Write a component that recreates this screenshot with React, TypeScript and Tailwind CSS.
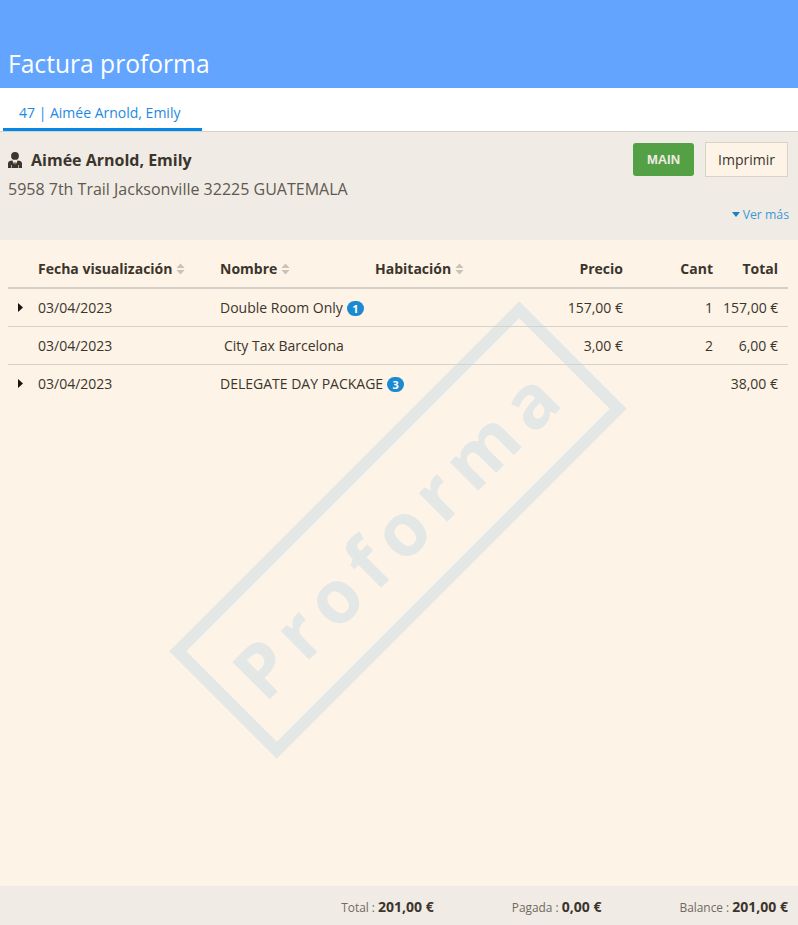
import type { ReactNode } from 'react'

const rows = [
  { date: '03/04/2023', name: 'Double Room Only', badge: '1', price: '157,00 €', qty: '1', total: '157,00 €', expand: true },
  { date: '03/04/2023', name: 'City Tax Barcelona', price: '3,00 €', qty: '2', total: '6,00 €', indent: true },
  { date: '03/04/2023', name: 'DELEGATE DAY PACKAGE', badge: '3', price: '', qty: '', total: '38,00 €', expand: true },
]

function SortIcon() {
  return (
    <svg width="9" height="12" viewBox="0 0 9 12" className="inline-block ml-[4px] align-[-1px]" fill="#c8c2b8">
      <path d="M4.5 0.5 L8.5 5 H0.5 Z" />
      <path d="M4.5 11.5 L8.5 7 H0.5 Z" />
    </svg>
  )
}

function UserIcon() {
  return (
    <svg width="14" height="16" viewBox="0 0 14 16" fill="#3b352c">
      <circle cx="7" cy="3.9" r="3.9" />
      <path d="M0 16 V11.6 C0 9.6 1.8 8.9 4.4 8.6 L6.2 12.6 L6.5 10.2 H7.5 L7.8 12.6 L9.6 8.6 C12.2 8.9 14 9.6 14 11.6 V16 H11 V13 H10.4 V16 H3.6 V13 H3 V16 Z" />
    </svg>
  )
}

function Badge({ children }: { children: ReactNode }) {
  return (
    <span className="inline-block ml-[4px] h-[15px] min-w-[17px] px-[5px] rounded-full bg-[#1b8ad0] text-white text-[11px] font-bold leading-[15px] text-center align-baseline">
      {children}
    </span>
  )
}

function Summary({ label, value }: { label: string; value: string }) {
  return (
    <div className="text-[11.9px] text-[#6f6a62]">
      {label} : <span className="text-[14px] font-bold text-[#3b352c]">{value}</span>
    </div>
  )
}

export default function App() {
  return (
    <div className="h-[925px] flex flex-col bg-[#fdf3e7] text-[#3b352c] text-[14px] font-['Open_Sans',sans-serif] overflow-hidden">
      <div className="h-[88px] shrink-0 bg-[#63a4ff] flex items-end px-[8px] pb-[6px]">
        <h1 className="text-[24.6px] leading-[36px] text-white">Factura proforma</h1>
      </div>

      <div className="h-[44px] shrink-0 bg-white border-t border-b border-t-white border-b-[#d5d1cb] pl-[3px] flex">
        <div className="h-[43px] mt-[-1px] w-[199px] pl-[16px] pt-[15px] leading-[19px] text-[#1e88e5] border-b-[3px] border-[#0288e6]">
          47 | Aimée Arnold, Emily
        </div>
      </div>

      <div className="h-[108px] shrink-0 bg-[#f0ebe4] pl-[8px] pr-[10px] pt-[10px] flex justify-between">
        <div className="pt-[7px]">
          <div className="flex items-center gap-[9px] h-[22px] text-[16px] font-bold">
            <UserIcon />
            Aimée Arnold, Emily
          </div>
          <div className="mt-[7px] text-[16px] leading-[22px] text-[#5e5950]">5958 7th Trail Jacksonville 32225 GUATEMALA</div>
        </div>
        <div className="flex flex-col items-end">
          <div className="flex items-center gap-[11px]">
            <button className="h-[33px] w-[61px] rounded-[3px] bg-[#54a044] text-[#f0ebe4] text-[13px] font-bold font-['Liberation_Sans',sans-serif]">MAIN</button>
            <button className="h-[35px] w-[83px] border border-[#d8d2c7] bg-[#fdf3e7] text-[14px] text-[#3b352c]">Imprimir</button>
          </div>
          <div className="mt-[29px] mr-[-1px] flex items-center gap-[3px] text-[12.25px] leading-[17px] text-[#3a9ad9]">
            <svg width="8" height="5" viewBox="0 0 8 5" fill="#1b7fc4">
              <path d="M0 0 H8 L4 5 Z" />
            </svg>
            Ver más
          </div>
        </div>
      </div>

      <div className="relative flex-1 px-[8px] pt-[10px]">
        {/* sello de agua, va detras de la tabla */}
        <div className="absolute left-[398px] top-[290px] -translate-x-1/2 -translate-y-1/2 -rotate-45 w-[495px] h-[152px] border-[12px] border-[#e3e8e6] flex items-center justify-center text-[74px] font-bold tracking-[0.14em] text-[#e3e8e6] select-none">
          Proforma
        </div>

        <table className="relative w-[780px] table-fixed border-collapse">
          <colgroup>
            <col className="w-[20px]" />
            <col className="w-[182px]" />
            <col className="w-[155px]" />
            <col className="w-[165px]" />
            <col className="w-[103px]" />
            <col className="w-[90px]" />
            <col className="w-[65px]" />
          </colgroup>
          <thead>
            <tr className="h-[38px] border-b-2 border-[#d5d1c9] font-bold text-left">
              <th />
              <th className="px-[10px] whitespace-nowrap">Fecha visualización<SortIcon /></th>
              <th className="px-[10px]">Nombre<SortIcon /></th>
              <th className="px-[10px]">Habitación<SortIcon /></th>
              <th className="px-[10px] text-right">Precio</th>
              <th className="px-[10px] text-right">Cant</th>
              <th className="pr-[10px] text-right">Total</th>
            </tr>
          </thead>
          <tbody>
            {rows.map((row, index) => (
              <tr key={row.name} className={index < rows.length - 1 ? 'h-[38px] border-b border-[#d3d3cc]' : 'h-[38px]'}>
                <td className="pl-[10px]">
                  {row.expand && (
                    <svg width="5" height="9" viewBox="0 0 5 9" fill="#1c1210" className="block">
                      <path d="M0 0 L5 4.5 L0 9 Z" />
                    </svg>
                  )}
                </td>
                <td className="px-[10px] pt-[1px]">{row.date}</td>
                <td colSpan={2} className={row.indent ? 'pl-[14px] pr-[10px] pt-[1px]' : 'px-[10px] pt-[1px]'}>
                  {row.name}
                  {row.badge && <Badge>{row.badge}</Badge>}
                </td>
                <td className="px-[10px] pt-[1px] text-right">{row.price}</td>
                <td className="px-[10px] pt-[1px] text-right">{row.qty}</td>
                <td className="pr-[10px] pt-[1px] text-right whitespace-nowrap">{row.total}</td>
              </tr>
            ))}
          </tbody>
        </table>
      </div>

      <div className="h-[39px] shrink-0 bg-[#f0ebe4] flex items-center justify-end gap-[78px] pr-[10px] pt-[2px]">
        <Summary label="Total" value="201,00 €" />
        <Summary label="Pagada" value="0,00 €" />
        <Summary label="Balance" value="201,00 €" />
      </div>
    </div>
  )
}
